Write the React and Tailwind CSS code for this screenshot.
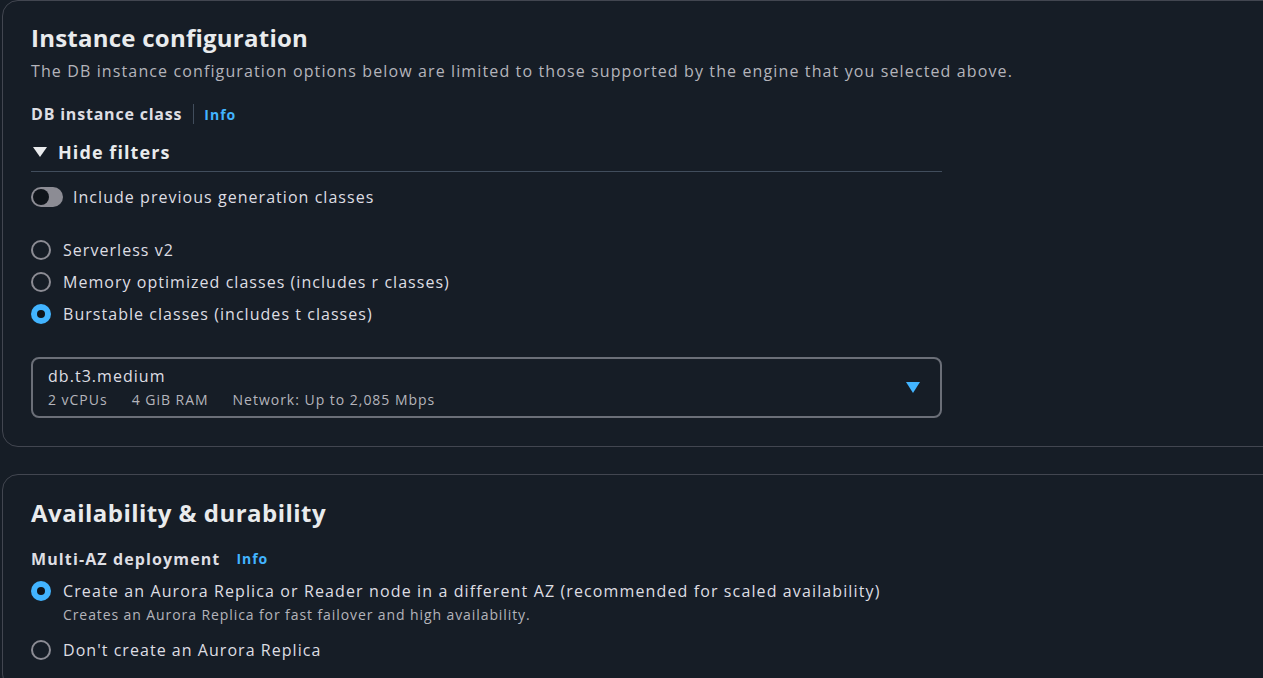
import React from 'react';

const font = { fontFamily: '"Open Sans", "Noto Sans", sans-serif' };

function Radio({ checked }) {
  if (checked) {
    return (
      <span className="flex h-5 w-5 shrink-0 items-center justify-center rounded-full bg-[#42b4ff]">
        <span className="h-[8px] w-[8px] rounded-full bg-[#0f141a]" />
      </span>
    );
  }
  return <span className="h-5 w-5 shrink-0 rounded-full border-2 border-[#8c8c94]" />;
}

function RadioRow({ checked, label }) {
  return (
    <div className="flex h-[32px] items-center gap-3">
      <Radio checked={checked} />
      <span className="text-[16px] leading-[22px] tracking-[0.065em] text-[#dedee3]">{label}</span>
    </div>
  );
}

function Info() {
  return <span className="text-[14px] font-bold leading-[20px] tracking-[0.07em] text-[#42b4ff]">Info</span>;
}

export default function App() {
  return (
    <div className="h-[678px] w-[1263px] overflow-hidden bg-[#161d26] pl-[2px]" style={font}>
      {/* Instance configuration */}
      <section className="w-[1300px] rounded-2xl border border-[#424650] pb-[28px] pl-[28px] pt-[22px]">
        <h2 className="text-[24px] font-bold leading-[30px] tracking-[0.01em] text-[#e9ebed]">Instance configuration</h2>
        <p className="mt-[7px] text-[16px] leading-[22px] tracking-[0.07em] text-[#b4b4bb]">
          The DB instance configuration options below are limited to those supported by the engine that you selected above.
        </p>

        <div className="mt-[21px] flex h-[22px] items-center">
          <span className="text-[16px] font-bold leading-[22px] tracking-[0.05em] text-[#dedee3]">DB instance class</span>
          <span className="ml-[11px] h-[20px] border-l border-[#414d5c]" />
          <span className="ml-[10px]">
            <Info />
          </span>
        </div>

        <div className="w-[911px]">
          <div className="mt-[15px] flex h-[24px] items-center gap-[11px]">
            <svg width="14" height="10" viewBox="0 0 14 10" className="ml-[2px]">
              <path d="M0 0 L14 0 L7 10 Z" fill="#e9ebed" />
            </svg>
            <span className="text-[18px] font-bold leading-[24px] tracking-[0.06em] text-[#e9ebed]">Hide filters</span>
          </div>
          <div className="mt-[7px] h-px bg-[#414d5c]" />

          <div className="mt-[13px] flex h-[24px] items-center gap-[10px]">
            <span className="flex h-[20px] w-[32px] items-center rounded-full bg-[#8c8c94] px-[2px]">
              <span className="h-[16px] w-[16px] rounded-full bg-[#0f141a]" />
            </span>
            <span className="text-[16px] leading-[22px] tracking-[0.065em] text-[#dedee3]">
              Include previous generation classes
            </span>
          </div>

          <div className="mt-[25px]">
            <RadioRow label="Serverless v2" />
            <RadioRow label="Memory optimized classes (includes r classes)" />
            <RadioRow checked label="Burstable classes (includes t classes)" />
          </div>

          <div className="mt-[27px] flex h-[61px] items-center justify-between rounded-lg border-2 border-[#6b6f78] pl-[15px] pr-[20px]">
            <div className="flex flex-col gap-[4px]">
              <span className="text-[16px] leading-[20px] tracking-[0.065em] text-[#dedee3]">db.t3.medium</span>
              <div className="flex gap-[24px] text-[14px] leading-[20px] tracking-[0.07em] text-[#b4b4bb]">
                <span>2 vCPUs</span>
                <span>4 GiB RAM</span>
                <span>Network: Up to 2,085 Mbps</span>
              </div>
            </div>
            <svg width="14" height="11" viewBox="0 0 14 11">
              <path d="M0 0 L14 0 L7 11 Z" fill="#42b4ff" />
            </svg>
          </div>
        </div>
      </section>

      {/* Availability & durability */}
      <section className="mt-[27px] w-[1300px] rounded-2xl border border-[#424650] pb-[28px] pl-[28px] pt-[23px]">
        <h2 className="text-[24px] font-bold leading-[30px] tracking-[0.02em] text-[#e9ebed]">
          Availability &amp; durability
        </h2>
        <div className="mt-[20px] flex h-[22px] items-center gap-[16px]">
          <span className="text-[16px] font-bold leading-[22px] tracking-[0.07em] text-[#dedee3]">
            Multi-AZ deployment
          </span>
          <Info />
        </div>

        <div className="mt-[10px] flex gap-3">
          <span className="mt-px">
            <Radio checked />
          </span>
          <div className="flex flex-col">
            <span className="text-[16px] leading-[22px] tracking-[0.07em] text-[#dedee3]">
              Create an Aurora Replica or Reader node in a different AZ (recommended for scaled availability)
            </span>
            <span className="mt-[3px] text-[14px] leading-[20px] tracking-[0.065em] text-[#b4b4bb]">
              Creates an Aurora Replica for fast failover and high availability.
            </span>
          </div>
        </div>

        <div className="mt-[14px] flex h-[22px] items-center gap-3">
          <Radio />
          <span className="text-[16px] leading-[22px] tracking-[0.065em] text-[#dedee3]">
            Don't create an Aurora Replica
          </span>
        </div>
      </section>
    </div>
  );
}
